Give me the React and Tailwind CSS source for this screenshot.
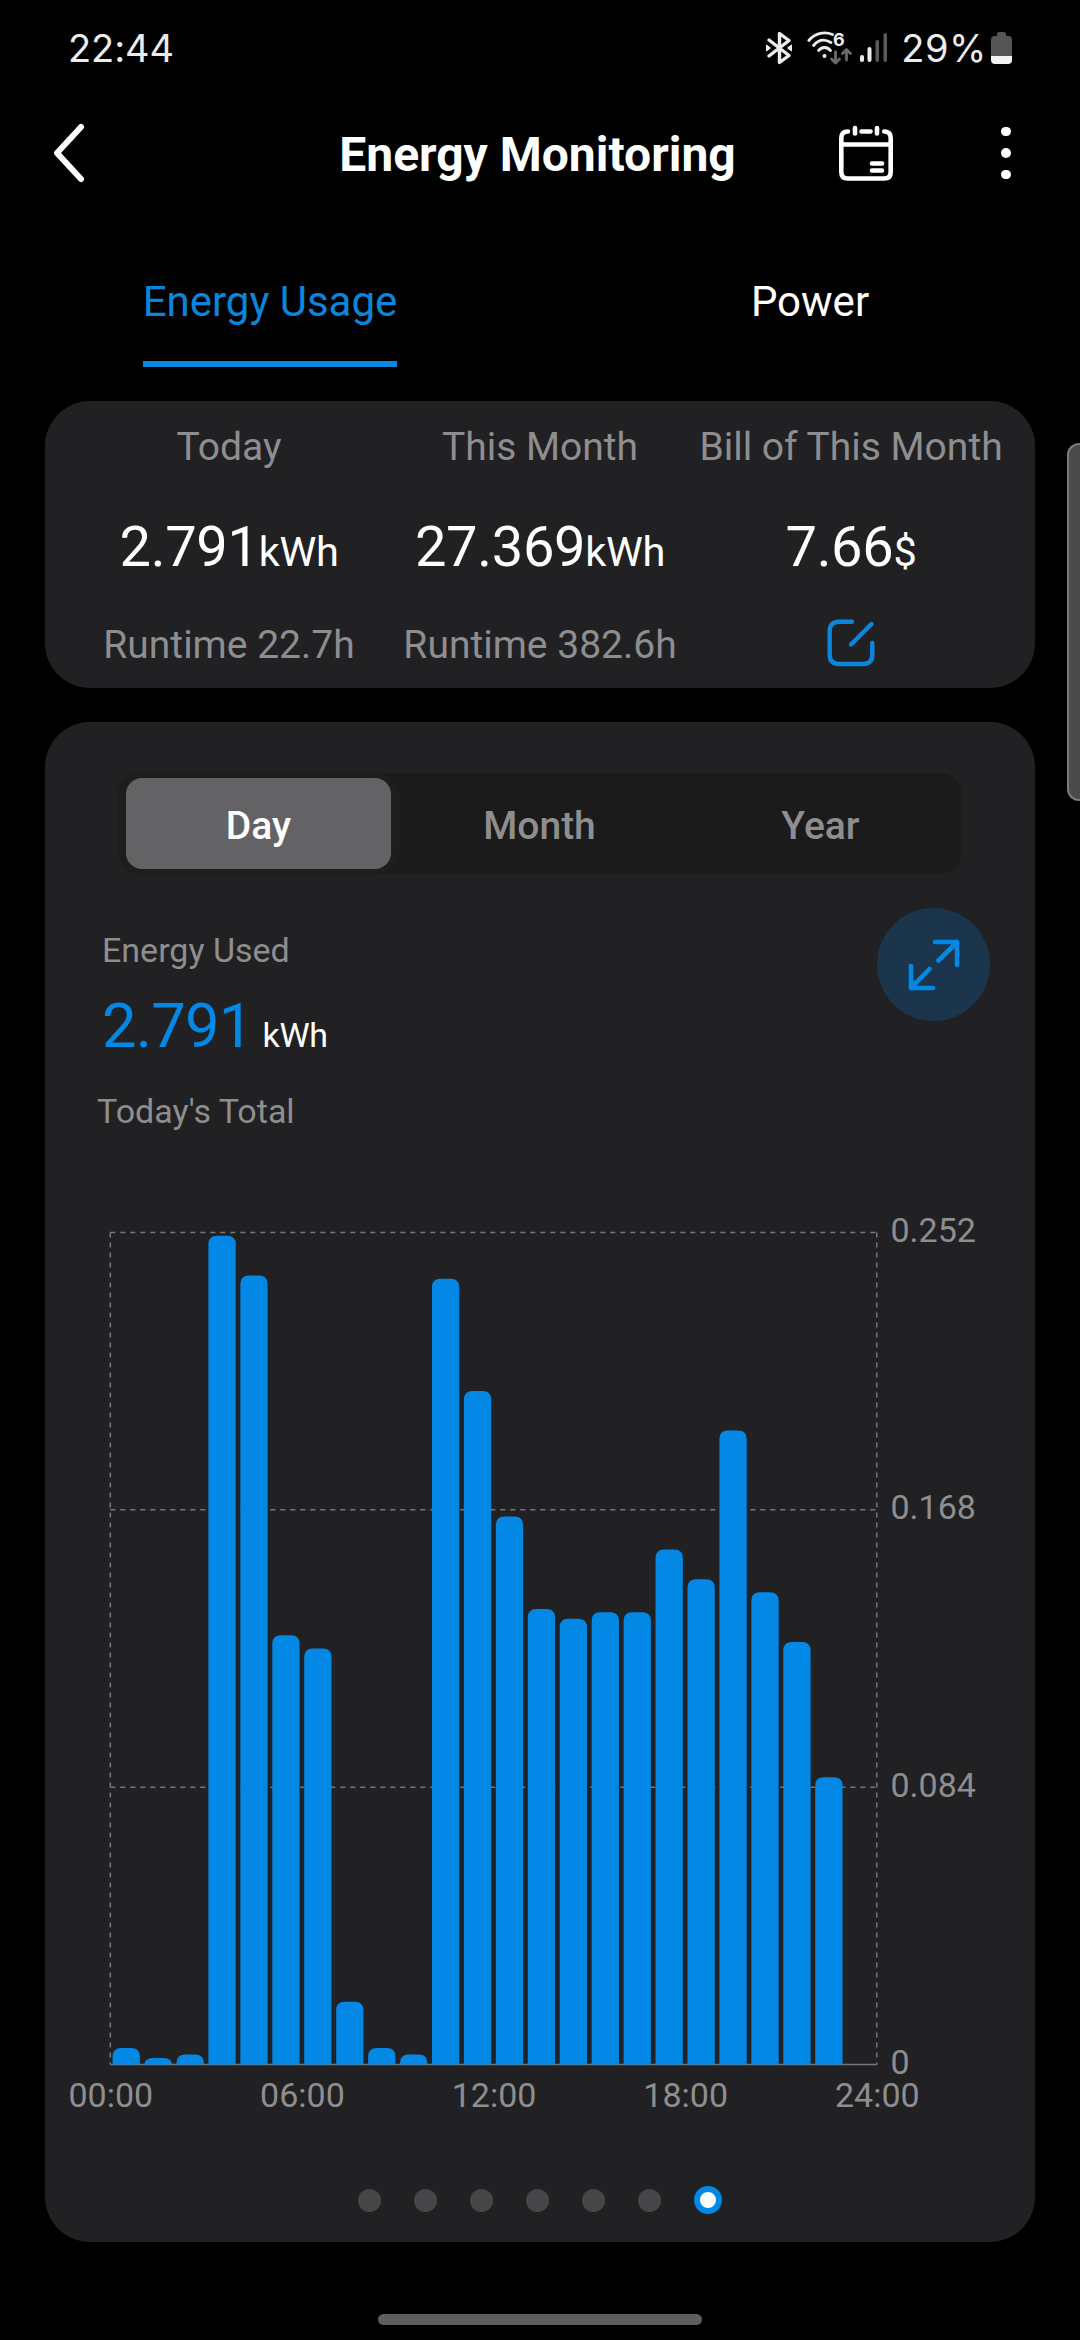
import { useState } from "react";

const usage = [
  0.005, 0.002, 0.003, 0.251, 0.239, 0.13, 0.126, 0.019, 0.005, 0.003, 0.238,
  0.204, 0.166, 0.138, 0.135, 0.137, 0.137, 0.156, 0.147, 0.192, 0.143, 0.128,
  0.087,
];

const yTicks = ["0.252", "0.168", "0.084", "0"];
const xTicks = ["00:00", "06:00", "12:00", "18:00", "24:00"];
const ranges = ["Day", "Month", "Year"];

// Plot area inside the chart svg
const LEFT = 65.3;
const TOP = 32.5;
const WIDTH = 766.5;
const HEIGHT = 832;
const MAX = 0.252;

function StatusBar() {
  return (
    <div className="flex h-24 items-center justify-between pr-[68px] pl-[68px] font-[Inter,sans-serif] text-[38px] text-[#ececec]">
      <span className="tracking-[-0.1px]">22:44</span>
      <div className="flex items-center">
        <svg width="28" height="34" viewBox="0 0 28 34" fill="none">
          <path
            d="M4 9 24 24.5 14.500 31.500V2.500L24 9.500 4 25"
            stroke="#ececec"
            strokeWidth="3.400"
            strokeLinecap="round"
            strokeLinejoin="round"
          />
          <path d="M1.500 14v6l4-3zM26.500 14v6l-4-3z" fill="#ececec" stroke="#ececec" strokeLinejoin="round" />
        </svg>
        <svg className="ml-[14px] overflow-visible" width="46" height="34" viewBox="0 0 46 34" fill="none">
          <g stroke="#ececec" strokeWidth="2.800" strokeLinecap="round">
            <path d="M1.800 9.500C8.500 1.500 18 .500 25.500 3.500" />
            <path d="M6.500 14.500C11.500 8.500 18 8 24 11.500" />
            <path d="M11.500 19.500c3.500-4 8.500-4 12 0" />
          </g>
          <circle cx="17.500" cy="25" r="2" fill="#ececec" />
          <text x="26" y="15" fill="#ececec" fontSize="18" fontWeight="700">6</text>
          <g stroke="#6a6a6a" strokeWidth="2.800" strokeLinecap="round" strokeLinejoin="round">
            <path d="M28.500 21v10M24.500 28l4 4 4-4" />
            <path d="M39.500 29V19M35.500 22.500l4-4 4 4" />
          </g>
        </svg>
        <svg className="ml-[7px]" width="28" height="34" viewBox="0 0 28 34">
          <rect x="0" y="24" width="4" height="7" rx="2" fill="#ececec" />
          <rect x="7.500" y="16" width="4" height="15" rx="2" fill="#ececec" />
          <rect x="15.500" y="9" width="3.500" height="22" rx="1.700" fill="#5a5a5a" />
          <rect x="23.500" y="2" width="3.500" height="29" rx="1.700" fill="#5a5a5a" />
        </svg>
        <span className="ml-[13px] tracking-[0.6px]">29%</span>
        <svg className="ml-[4px]" width="21" height="32" viewBox="0 0 21 32">
          <path d="M0 8q0-4 4-4h2V2q0-2 2-2h5q2 0 2 2v2h2q4 0 4 4v16H0z" fill="#555" />
          <path d="M0 24h21v4q0 4-4 4H4q-4 0-4-4z" fill="#f2f2f2" />
        </svg>
      </div>
    </div>
  );
}

function Header() {
  return (
    <header className="flex h-[114px] items-center pr-[64px] pl-[49px] text-white">
      <button className="flex w-[180px]">
        <svg width="40" height="62" viewBox="0 0 40 62" fill="none">
          <path
            d="M32 5 8 31l24 26"
            stroke="currentColor"
            strokeWidth="6"
            strokeLinecap="round"
            strokeLinejoin="round"
          />
        </svg>
      </button>
      <h1 className="ml-[90px] flex-1 pt-[3px] text-center text-[48px] leading-[60px] font-bold whitespace-nowrap">
        Energy Monitoring
      </h1>
      <button className="ml-[82px]">
        <svg width="56" height="58" viewBox="0 0 56 58" fill="none" stroke="currentColor" strokeWidth="4.600" strokeLinecap="round">
          <path d="M10 7.500Q3.300 7.500 3.300 14v34q0 6.500 6.500 6.500h36.400q6.500 0 6.500-6.500V14q0-6.500-6.500-6.500" />
          <path d="M23.500 7.500h9M17 4v5.500M39 4v5.500M4 20.500h48M34 39.500h10M34 46.500h10" />
        </svg>
      </button>
      <button className="ml-[102px] flex w-[20px] flex-col items-center gap-[12px]">
        <span className="size-[9.500px] rounded-full bg-white" />
        <span className="size-[9.500px] rounded-full bg-white" />
        <span className="size-[9.500px] rounded-full bg-white" />
      </button>
    </header>
  );
}

function Stat({ label, value, unit, children }) {
  return (
    <div className="flex w-[311px] flex-col items-center whitespace-nowrap">
      <p className="text-[39px] leading-[50px] text-[#8e8e90]">{label}</p>
      <p className="mt-[39px] h-[72px] text-[56px] leading-[72px] tracking-[-0.3px] text-white">
        {value}
        <span className="text-[41.500px] leading-none">{unit}</span>
      </p>
      <div className="mt-[37px] flex h-[50px] items-center text-[39px] leading-[50px] text-[#8e8e90]">
        {children}
      </div>
    </div>
  );
}

function UsageChart() {
  const step = WIDTH / 24;
  const right = LEFT + WIDTH;
  const bottom = TOP + HEIGHT;

  return (
    <svg className="mt-[65px] block" width="990" height="940" viewBox="0 0 990 940">
      <g stroke="#77777a" strokeWidth="1.500" strokeDasharray="5 5">
        {yTicks.slice(0, 3).map((t, i) => (
          <path key={t} d={`M${LEFT} ${TOP + (HEIGHT / 3) * i}H${right}`} />
        ))}
        <path d={`M${LEFT} ${TOP}V${bottom}`} />
        <path d={`M${right} ${TOP}V${bottom}`} />
      </g>
      <path d={`M${LEFT} ${bottom}H${right}`} stroke="#77777a" strokeWidth="1.500" />

      {usage.map((v, i) => {
        const x = LEFT + i * step + 2.3;
        const w = 27.3;
        const y = bottom - (v / MAX) * HEIGHT;
        const r = Math.min(8.5, bottom - y);
        return (
          <path
            key={i}
            d={`M${x} ${bottom}V${y + r}q0 ${-r} 8.500 ${-r}h${w - 17}q8.500 0 8.500 ${r}V${bottom}z`}
            fill="#0388e5"
          />
        );
      })}

      <g fill="#8e8e90" fontSize="34">
        {yTicks.map((t, i) => (
          <text key={t} x="845.500" y={42 + (HEIGHT / 3) * i}>
            {t}
          </text>
        ))}
        {xTicks.map((t, i) => (
          <text key={t} x={LEFT + (WIDTH / 4) * i + 0.5} y="907" textAnchor="middle">
            {t}
          </text>
        ))}
      </g>
    </svg>
  );
}

export default function App() {
  const [range, setRange] = useState("Day");

  return (
    <div className="relative h-[2340px] w-[1080px] overflow-hidden bg-black font-[Roboto,sans-serif]">
      <StatusBar />
      <Header />

      <nav className="flex h-[157px] text-[42px] leading-[60px]">
        <div className="flex flex-1 justify-center">
          <span className="border-b-[6px] border-[#0a87dc] pt-[62px] text-[#0a87dc]">
            Energy Usage
          </span>
        </div>
        <div className="flex flex-1 justify-center">
          <span className="pt-[62px] text-white">Power</span>
        </div>
      </nav>

      <section className="mx-[45px] mt-[34px] flex h-[287px] justify-center rounded-[45px] bg-[#212123] pt-[21px]">
        <Stat label="Today" value="2.791" unit="kWh">
          Runtime 22.7h
        </Stat>
        <Stat label="This Month" value="27.369" unit="kWh">
          Runtime 382.6h
        </Stat>
        <Stat label="Bill of This Month" value="7.66" unit="$">
          <svg className="mb-[4px]" width="48" height="48" viewBox="0 0 48 48" fill="none" stroke="#0a87dc" strokeWidth="4.400" strokeLinecap="round">
            <path d="M25 2.800H12Q2.700 2.800 2.700 12v23.500q0 9.500 9.300 9.500h24q9.300 0 9.300-9.500V24" />
            <path d="M24 25.500 44.500 5" />
          </svg>
        </Stat>
      </section>

      <section className="mx-[45px] mt-[34px] h-[1520px] rounded-[45px] bg-[#212123] pt-[51px]">
        <div className="mx-[73px] flex h-[101px] rounded-[22px] bg-[#1b1b1b] text-[39px] font-medium">
          {ranges.map((r) =>
            r === range ? (
              <div key={r} className="w-[281px] rounded-[22px] bg-[#1e1e1e] px-[8px] py-[5px]">
                <button className="h-[91px] w-full rounded-[16px] bg-[#636365] pt-[5px] text-white">
                  {r}
                </button>
              </div>
            ) : (
              <button
                key={r}
                onClick={() => setRange(r)}
                className="w-[281px] pt-[5px] text-[#8e8e8e]"
              >
                {r}
              </button>
            )
          )}
        </div>

        <div className="mt-[34px] flex h-[227px] items-start justify-between pr-[45px] pl-[52px]">
          <div className="pt-[18px] text-[34px] leading-[48px] text-[#8e8e8e]">
            <p className="pl-[5px]">Energy Used</p>
            <p className="mt-[12px] h-[80px] pl-[5px] text-[61.500px] leading-[80px] tracking-[-0.8px] text-[#0388e5]">
              2.791
              <span className="ml-[10px] text-[34px] leading-none tracking-[-0.3px] text-white">kWh</span>
            </p>
            <p className="mt-[21px]">Today's Total</p>
          </div>
          <button className="flex size-[113px] items-center justify-center rounded-full bg-[#1b354c]">
            <svg width="52" height="52" viewBox="0 0 52 52" fill="none" stroke="#0388e5" strokeWidth="4.600" strokeLinecap="round" strokeLinejoin="round">
              <path d="M27 3h22v23M49 3 30.500 21.500" />
              <path d="M3 27v22h22M3 49l18.500-19" />
            </svg>
          </button>
        </div>

        <UsageChart />

        <div className="mt-[46px] flex items-center justify-center gap-[33px]">
          {[0, 1, 2, 3, 4, 5].map((i) => (
            <span key={i} className="size-[23px] rounded-full bg-[#464648]" />
          ))}
          <span className="size-[28px] rounded-full border-[6px] border-[#0388e5] bg-white" />
        </div>
      </section>

      <div className="mx-auto mt-[72px] h-[11px] w-[324px] rounded-full bg-[#5e5e5e]" />

      {/* edge panel handle */}
      <div className="absolute top-[443px] right-0 h-[358px] w-[13px] rounded-l-[12px] border-y-2 border-l-2 border-[#7a7a7a] bg-[#4a4a4a]" />
    </div>
  );
}
